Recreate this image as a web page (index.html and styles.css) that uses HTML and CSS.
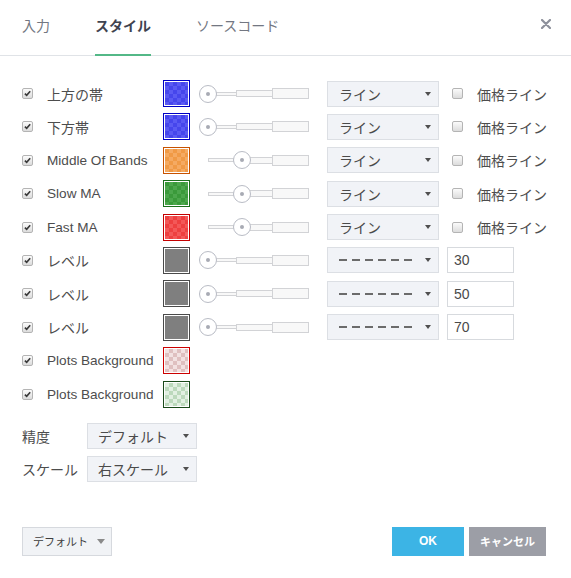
FILE: index.html
```html
<!DOCTYPE html>
<html lang="ja">
<head>
<meta charset="utf-8">
<title>スタイル</title>
<link rel="stylesheet" href="styles.css">
</head>
<body>
<div class="dialog">
  <div class="header">
    <div class="tab">入力</div>
    <div class="tab active">スタイル</div>
    <div class="tab">ソースコード</div>
    <div class="close"><svg width="10" height="10" viewBox="0 0 10 10"><path d="M1 1L9 9M9 1L1 9" stroke="#8d909b" stroke-width="2.2" stroke-linecap="round"/></svg></div>
  </div>

  <div class="content">
    <div class="row">
      <span class="cb checked"><svg viewBox="0 0 11 11"><path d="M2.3 5.6L4.5 7.8L8.8 2.8" fill="none" stroke="#3a3a3a" stroke-width="2"/></svg></span>
      <span class="label">上方の帯</span>
      <span class="swatch sw-blue"><i></i></span>
      <div class="slider"><div class="track"><i class="t1"></i><i class="t2"></i><i class="t3"></i></div><span class="knob" style="left:0px"></span></div>
      <div class="select sel-line"><span>ライン</span><i class="caret"></i></div>
      <span class="cb"></span><span class="plabel">価格ライン</span>
    </div>
    <div class="row">
      <span class="cb checked"><svg viewBox="0 0 11 11"><path d="M2.3 5.6L4.5 7.8L8.8 2.8" fill="none" stroke="#3a3a3a" stroke-width="2"/></svg></span>
      <span class="label">下方帯</span>
      <span class="swatch sw-blue"><i></i></span>
      <div class="slider"><div class="track"><i class="t1"></i><i class="t2"></i><i class="t3"></i></div><span class="knob" style="left:0px"></span></div>
      <div class="select sel-line"><span>ライン</span><i class="caret"></i></div>
      <span class="cb"></span><span class="plabel">価格ライン</span>
    </div>
    <div class="row">
      <span class="cb checked"><svg viewBox="0 0 11 11"><path d="M2.3 5.6L4.5 7.8L8.8 2.8" fill="none" stroke="#3a3a3a" stroke-width="2"/></svg></span>
      <span class="label latin">Middle Of Bands</span>
      <span class="swatch sw-orange"><i></i></span>
      <div class="slider"><div class="track"><i class="t1"></i><i class="t2"></i><i class="t3"></i></div><span class="knob" style="left:34px"></span></div>
      <div class="select sel-line"><span>ライン</span><i class="caret"></i></div>
      <span class="cb"></span><span class="plabel">価格ライン</span>
    </div>
    <div class="row">
      <span class="cb checked"><svg viewBox="0 0 11 11"><path d="M2.3 5.6L4.5 7.8L8.8 2.8" fill="none" stroke="#3a3a3a" stroke-width="2"/></svg></span>
      <span class="label latin">Slow MA</span>
      <span class="swatch sw-green"><i></i></span>
      <div class="slider"><div class="track"><i class="t1"></i><i class="t2"></i><i class="t3"></i></div><span class="knob" style="left:34px"></span></div>
      <div class="select sel-line"><span>ライン</span><i class="caret"></i></div>
      <span class="cb"></span><span class="plabel">価格ライン</span>
    </div>
    <div class="row">
      <span class="cb checked"><svg viewBox="0 0 11 11"><path d="M2.3 5.6L4.5 7.8L8.8 2.8" fill="none" stroke="#3a3a3a" stroke-width="2"/></svg></span>
      <span class="label latin">Fast MA</span>
      <span class="swatch sw-red"><i></i></span>
      <div class="slider"><div class="track"><i class="t1"></i><i class="t2"></i><i class="t3"></i></div><span class="knob" style="left:34px"></span></div>
      <div class="select sel-line"><span>ライン</span><i class="caret"></i></div>
      <span class="cb"></span><span class="plabel">価格ライン</span>
    </div>
    <div class="row">
      <span class="cb checked"><svg viewBox="0 0 11 11"><path d="M2.3 5.6L4.5 7.8L8.8 2.8" fill="none" stroke="#3a3a3a" stroke-width="2"/></svg></span>
      <span class="label">レベル</span>
      <span class="swatch sw-gray"><i></i></span>
      <div class="slider"><div class="track"><i class="t1"></i><i class="t2"></i><i class="t3"></i></div><span class="knob" style="left:0px"></span></div>
      <div class="select sel-line"><span class="dashes"></span><i class="caret"></i></div>
      <div class="num">30</div>
    </div>
    <div class="row">
      <span class="cb checked"><svg viewBox="0 0 11 11"><path d="M2.3 5.6L4.5 7.8L8.8 2.8" fill="none" stroke="#3a3a3a" stroke-width="2"/></svg></span>
      <span class="label">レベル</span>
      <span class="swatch sw-gray"><i></i></span>
      <div class="slider"><div class="track"><i class="t1"></i><i class="t2"></i><i class="t3"></i></div><span class="knob" style="left:0px"></span></div>
      <div class="select sel-line"><span class="dashes"></span><i class="caret"></i></div>
      <div class="num">50</div>
    </div>
    <div class="row">
      <span class="cb checked"><svg viewBox="0 0 11 11"><path d="M2.3 5.6L4.5 7.8L8.8 2.8" fill="none" stroke="#3a3a3a" stroke-width="2"/></svg></span>
      <span class="label">レベル</span>
      <span class="swatch sw-gray"><i></i></span>
      <div class="slider"><div class="track"><i class="t1"></i><i class="t2"></i><i class="t3"></i></div><span class="knob" style="left:0px"></span></div>
      <div class="select sel-line"><span class="dashes"></span><i class="caret"></i></div>
      <div class="num">70</div>
    </div>
    <div class="row">
      <span class="cb checked"><svg viewBox="0 0 11 11"><path d="M2.3 5.6L4.5 7.8L8.8 2.8" fill="none" stroke="#3a3a3a" stroke-width="2"/></svg></span>
      <span class="label latin">Plots Background</span>
      <span class="swatch sw-pink"><i></i></span>
    </div>
    <div class="row">
      <span class="cb checked"><svg viewBox="0 0 11 11"><path d="M2.3 5.6L4.5 7.8L8.8 2.8" fill="none" stroke="#3a3a3a" stroke-width="2"/></svg></span>
      <span class="label latin">Plots Background</span>
      <span class="swatch sw-mint"><i></i></span>
    </div>

    <div class="opts">
      <div class="opt">
        <span class="olabel">精度</span>
        <div class="select sel-opt"><span>デフォルト</span><i class="caret"></i></div>
      </div>
      <div class="opt">
        <span class="olabel">スケール</span>
        <div class="select sel-opt"><span>右スケール</span><i class="caret"></i></div>
      </div>
    </div>
  </div>

  <div class="footer">
    <div class="btn-default"><span>デフォルト</span><i class="tri"></i></div>
    <div class="actions">
      <div class="btn ok">OK</div>
      <div class="btn cancel">キャンセル</div>
    </div>
  </div>
</div>
</body>
</html>
```

FILE: styles.css
```css
* { box-sizing: border-box; }
html, body { margin: 0; padding: 0; background: #fff; }
body {
  font-family: "Liberation Sans", "Noto Sans CJK JP", sans-serif;
  font-size: 14px;
  color: #4a4a4a;
}
.dialog { width: 571px; height: 578px; background: #fff; }

.header {
  display: flex;
  align-items: flex-start;
  height: 56px;
  border-bottom: 1px solid #e0e3e7;
  padding-left: 22px;
}
.tab {
  height: 56px;
  line-height: 52px;
  margin-right: 45px;
  color: #737782;
  border-bottom: 2px solid transparent;
  white-space: nowrap;
}
.tab.active {
  color: #3f4350;
  font-weight: bold;
  border-bottom-color: #53b887;
}
.close {
  margin-left: auto;
  margin-right: 20px;
  margin-top: 19px;
  width: 10px;
  height: 10px;
  display: flex;
}

.content { padding: 24px 0 0 22px; }
.row {
  display: flex;
  align-items: center;
  height: 27px;
  margin-bottom: 6.4px;
}
.cb {
  width: 11px;
  height: 11px;
  border: 1px solid #b4b4b4;
  border-radius: 2px;
  background: linear-gradient(#fbfbfb, #dcdcdc);
  display: inline-flex;
  flex: none;
}
.cb svg { width: 100%; height: 100%; display: block; }
.row > .cb:first-child { margin-right: 14px; }
.label {
  width: 116px;
  white-space: nowrap;
  color: #4d4d4d;
}
.label.latin { font-size: 13.6px; }
.swatch {
  width: 27px;
  height: 27px;
  border: 1px solid #000;
  padding: 1px;
  background: #fff;
  flex: none;
  display: flex;
}
.swatch i {
  flex: 1;
  display: block;
  background-size: 8px 8px;
}
.sw-blue { border-color: #0000c4; }
.sw-blue i { background-color: #4646ec; background-image: conic-gradient(#5a5af3 25%, transparent 0 50%, #5a5af3 0 75%, transparent 0); }
.sw-orange { border-color: #c85200; }
.sw-orange i { background-color: #f09a46; background-image: conic-gradient(#f5aa62 25%, transparent 0 50%, #f5aa62 0 75%, transparent 0); }
.sw-green { border-color: #1b6e1b; }
.sw-green i { background-color: #3a9a3a; background-image: conic-gradient(#4ca74c 25%, transparent 0 50%, #4ca74c 0 75%, transparent 0); }
.sw-red { border-color: #c40000; }
.sw-red i { background-color: #ee4040; background-image: conic-gradient(#f35858 25%, transparent 0 50%, #f35858 0 75%, transparent 0); }
.sw-gray { border-color: #4a4a4a; }
.sw-gray i { background-color: #7f7f7f; }
.sw-pink { border-color: #cc0000; }
.sw-pink i { background-color: #f2e2e2; background-image: conic-gradient(#dfc0c0 25%, transparent 0 50%, #dfc0c0 0 75%, transparent 0); }
.sw-mint { border-color: #1a4a1a; }
.sw-mint i { background-color: #e2f0e2; background-image: conic-gradient(#bcd9bc 25%, transparent 0 50%, #bcd9bc 0 75%, transparent 0); }

.slider {
  position: relative;
  width: 110px;
  height: 18px;
  margin-left: 9px;
  flex: none;
}
.track {
  display: flex;
  align-items: center;
  height: 18px;
  margin-left: 9px;
}
.track i {
  display: block;
  border: 1px solid #d2d3d6;
  background: #f8f8f8;
  margin-left: -1px;
}
.track .t1 { width: 29px; height: 4px; margin-left: 0; }
.track .t2 { width: 37px; height: 7px; }
.track .t3 { width: 37px; height: 11px; }
.knob {
  position: absolute;
  top: 0;
  width: 18px;
  height: 18px;
  border-radius: 50%;
  border: 1px solid #b9bcc5;
  background: #fff;
}
.knob::after {
  content: "";
  position: absolute;
  left: 6px;
  top: 6px;
  width: 4px;
  height: 4px;
  border-radius: 50%;
  background: #a8abb4;
}

.select {
  display: flex;
  align-items: center;
  height: 26px;
  background: #f1f3f7;
  border: 1px solid #dcdfe4;
  padding: 0 7px 0 11px;
  color: #4a4a4a;
  flex: none;
}
.select span { flex: 1; white-space: nowrap; }
.caret {
  width: 0;
  height: 0;
  border-left: 3.5px solid transparent;
  border-right: 3.5px solid transparent;
  border-top: 4px solid #4f4f4f;
}
.sel-line { width: 112px; margin-left: 18px; }
.dashes {
  flex: none !important;
  width: 73px;
  height: 2px;
  margin-right: auto;
  background: repeating-linear-gradient(90deg, #6b6b6b 0 8px, transparent 8px 13px);
}
.row > .cb:not(:first-child) { margin-left: 13px; margin-right: 14px; }
.plabel { white-space: nowrap; color: #4d4d4d; }
.num {
  width: 67px;
  height: 26px;
  margin-left: 8px;
  border: 1px solid #d7dade;
  background: #fff;
  padding-left: 6px;
  line-height: 24px;
  color: #4a4a4a;
}

.opts { margin-top: 15px; display: flex; flex-direction: column; gap: 7px; }
.opt { display: flex; align-items: center; }
.olabel { width: 65px; white-space: nowrap; color: #4d4d4d; }
.sel-opt { width: 110px; padding-left: 10px; }

.footer {
  display: flex;
  align-items: center;
  justify-content: space-between;
  margin-top: 45px;
  padding: 0 25px 0 22px;
}
.btn-default {
  display: flex;
  align-items: center;
  width: 90px;
  height: 29px;
  background: #f1f3f6;
  border: 1px solid #d6d9de;
  padding-left: 10px;
  font-size: 11px;
  color: #3e3e3e;
}
.tri {
  margin-left: 9px;
  width: 0;
  height: 0;
  border-left: 4px solid transparent;
  border-right: 4px solid transparent;
  border-top: 5px solid #8a8a8a;
}
.actions { display: flex; gap: 5px; }
.btn {
  height: 29px;
  display: flex;
  align-items: center;
  justify-content: center;
  color: #fff;
  font-size: 11px;
  font-weight: bold;
}
.ok { width: 72px; background: #3cb4e5; font-size: 12px; }
.cancel { width: 77px; background: #9c9ea6; }
```
